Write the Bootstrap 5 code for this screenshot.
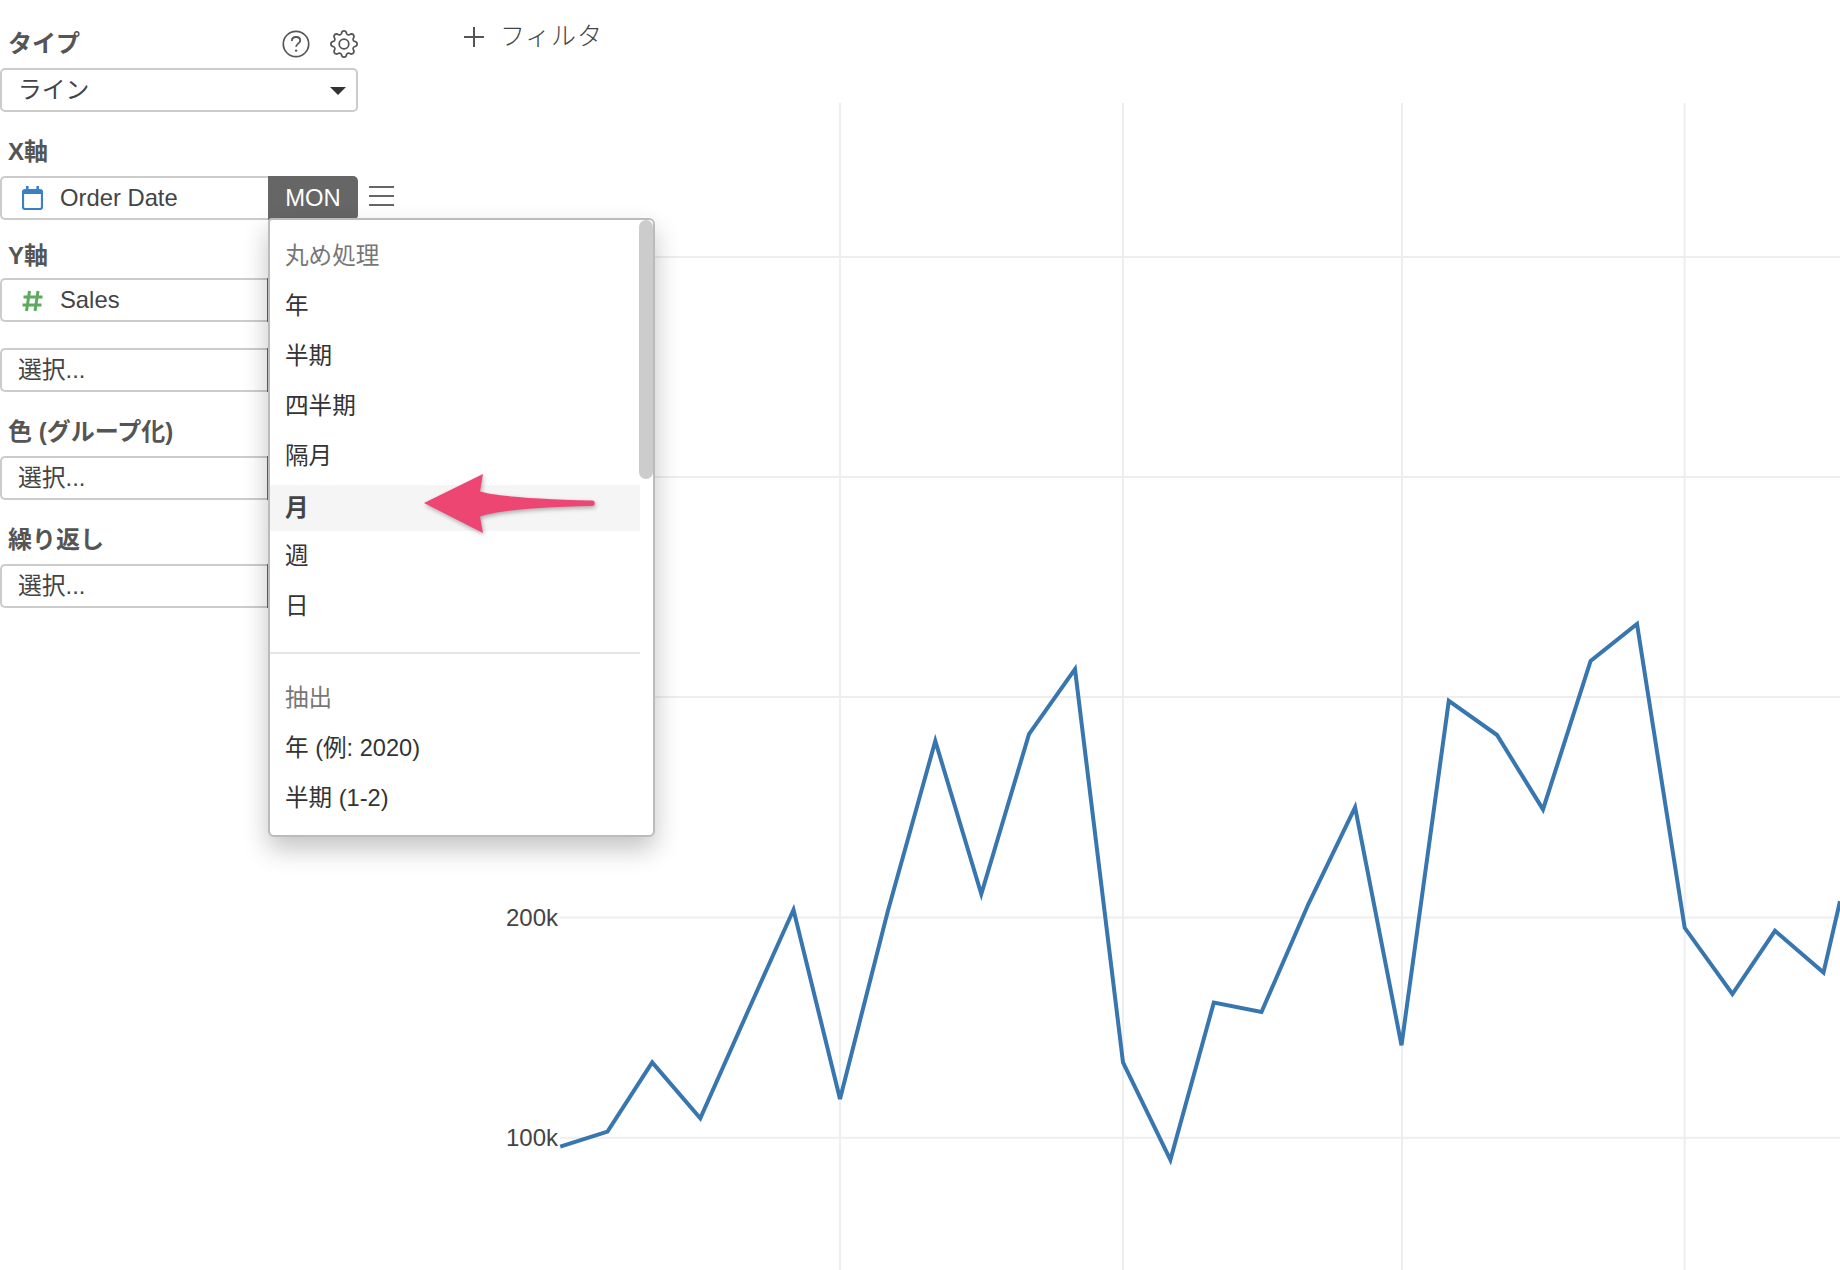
<!DOCTYPE html>
<html lang="ja">
<head>
<meta charset="utf-8">
<title>チャート</title>
<link href="https://cdn.jsdelivr.net/npm/bootstrap@5.3.0/dist/css/bootstrap.min.css" rel="stylesheet">
<style>
html,body{height:100%;}
body{font-family:"Liberation Sans","Noto Sans CJK JP",sans-serif;font-size:23.8px;color:#333;background:#fff;overflow:hidden;}
.stage{position:relative;width:1840px;height:1270px;overflow:hidden;}
.side{width:358px;flex:none;}
.lab{font-weight:700;color:#555;font-size:24px;line-height:34px;padding-left:8px;}
.lab-top{padding-top:27px;height:68px;}
.lab-x{margin-top:23px;height:41px;}
.lab-y{margin-top:20px;height:38px;line-height:32px;}
.lab-gap{margin-top:24px;height:40px;line-height:32px;}
.fld{height:44px;border:2.5px solid #ccc;border-radius:5px;background:#fff;line-height:39.5px;color:#444;padding-left:16px;white-space:nowrap;}
.typesel{position:relative;}
.typesel::after{content:"";position:absolute;right:10px;top:17px;border-left:8px solid transparent;border-right:8px solid transparent;border-top:8px solid #333;}
.rowf{width:358px;height:44px;}
.rowf-sel{margin-top:26px;}
.rowf .fld{flex:1 1 auto;border-right:0;border-radius:5px 0 0 5px;padding-left:20px;min-width:0;}
.rowf .fld.plain{padding-left:16px;}
.addon{flex:none;width:90px;background:#666;color:#fff;text-align:center;line-height:44px;border-radius:0 5px 5px 0;}
.addon.under{width:91px;}
.ic{flex:none;display:inline-block;margin-right:17px;vertical-align:-4px;}
.topic{position:absolute;top:30px;}
.burger{position:absolute;left:369px;top:186px;width:25px;height:20px;border-top:2px solid #666;border-bottom:2px solid #666;}
.burger::before{content:"";display:block;height:2px;background:#666;margin-top:7px;}
.mainp{flex:1 1 auto;min-width:0;}
.filt{height:103px;padding:19px 0 0 106px;color:#444;font-weight:300;font-size:25px;line-height:34px;letter-spacing:.8px;}
.filt svg{margin-right:16px;vertical-align:-2px;}
.chartsvg{display:block;}
.tick{font-family:"Liberation Sans",sans-serif;font-size:24px;fill:#444;text-anchor:end;}
.ddm.dropdown-menu{display:block;position:absolute;left:268px;top:218px;width:387px;height:619px;overflow:hidden;padding:11px 0 0;margin:0;border:2px solid #bbb;border-radius:4px 6px 6px 6px;box-shadow:0 12px 26px rgba(0,0,0,.24);font-size:23.6px;background:#fff;}
.ddm .inner{width:370px;}
.ddm .dropdown-header{padding:0 0 0 15px;line-height:50px;color:#777;font-size:23.6px;}
.ddm .dropdown-item{padding:0 0 0 15px;line-height:50px;color:#333;}
.ddm .dropdown-item.on{background:#f5f5f5;font-weight:700;line-height:46px;margin-top:4px;color:#444;}
.ddm .dropdown-divider{margin:21px 0 19px;border-top:2px solid #e5e5e5;opacity:1;}
.sbar{position:absolute;right:0;top:0;width:14px;height:259px;background:#ccc;border-radius:7px;}
.arrowsvg{position:absolute;left:415px;top:465px;z-index:1100;filter:drop-shadow(1px 2px 2px rgba(0,0,0,.3));}
</style>
</head>
<body>
<div class="stage d-flex">
  <aside class="side">
    <div class="lab lab-top">タイプ</div>
    <div class="fld typesel">ライン</div>
    <div class="lab lab-x">X軸</div>
    <div class="rowf d-flex">
      <div class="fld"><svg class="ic" width="21" height="24" viewBox="0 0 21 24"><rect x="1" y="4" width="19" height="19" rx="2" fill="none" stroke="#3a80c6" stroke-width="2.2"/><rect x="1" y="4" width="19" height="4" fill="#3a80c6"/><rect x="4" y="0" width="2.6" height="5" fill="#3a80c6"/><rect x="14.4" y="0" width="2.6" height="5" fill="#3a80c6"/></svg>Order Date</div>
      <div class="addon">MON</div>
    </div>
    <div class="lab lab-y">Y軸</div>
    <div class="rowf d-flex">
      <div class="fld"><svg class="ic" width="21" height="22" viewBox="0 0 21 22"><path d="M7.5 1 4.5 21M16 1l-3 20M1.5 7h19M.5 15h19" fill="none" stroke="#5cab5c" stroke-width="3"/></svg>Sales</div>
      <div class="addon under"></div>
    </div>
    <div class="rowf rowf-sel d-flex">
      <div class="fld plain">選択...</div>
      <div class="addon under"></div>
    </div>
    <div class="lab lab-gap">色 (グループ化)</div>
    <div class="rowf d-flex">
      <div class="fld plain">選択...</div>
      <div class="addon under"></div>
    </div>
    <div class="lab lab-gap">繰り返し</div>
    <div class="rowf d-flex">
      <div class="fld plain">選択...</div>
      <div class="addon under"></div>
    </div>
  </aside>
  <main class="mainp">
    <div class="filt"><svg width="20" height="20" viewBox="0 0 20 20"><path d="M10 0v20M0 10h20" stroke="#555" stroke-width="2"/></svg>フィルタ</div>
    <svg class="chartsvg" width="1482" height="1167" viewBox="358 103 1482 1167">
      <g stroke="#eee" stroke-width="2" fill="none">
        <path d="M560 257H1840M560 477H1840M560 697H1840M560 917.4H1840M560 1137.8H1840"/>
        <path d="M840 103V1270M1123 103V1270M1402 103V1270M1684.7 103V1270"/>
      </g>
      <text class="tick" x="558" y="926">200k</text>
      <text class="tick" x="558" y="1146">100k</text>
      <polyline fill="none" stroke="#3876b0" stroke-width="4" stroke-linejoin="miter" points="560.2,1146.6 607.5,1131.6 652.2,1062.4 700.3,1118.4 746.7,1014 793.5,909.8 840,1099.1 887.6,912 935.3,741 981.3,894 1029,734.2 1075,669.2 1123,1062.4 1170.4,1159.8 1213.8,1002.6 1261.5,1012 1308.3,904.3 1355.1,807.3 1401.5,1045.3 1448.8,700.9 1497,735 1543,809.4 1590.6,661 1637,623.9 1684.7,927.8 1732.4,994 1775,930.8 1823.5,972.6 1840,901.3"/>
    </svg>
  </main>

  <svg class="topic" style="left:282px" width="28" height="28" viewBox="0 0 28 28" aria-hidden="true"><circle cx="14" cy="14" r="12.7" fill="none" stroke="#555" stroke-width="1.7"/><path d="M9.8 11c0-2.6 2-4 4.3-4 2.4 0 4.1 1.5 4.1 3.5 0 3-4.1 3.2-4.1 6.2" fill="none" stroke="#555" stroke-width="1.8"/><circle cx="14.1" cy="20.6" r="1.2" fill="#555"/></svg>
  <svg class="topic" style="left:330px" width="28" height="28" viewBox="0 0 16 16" aria-hidden="true" fill="#555"><path d="M8 4.754a3.246 3.246 0 1 0 0 6.492 3.246 3.246 0 0 0 0-6.492zM5.754 8a2.246 2.246 0 1 1 4.492 0 2.246 2.246 0 0 1-4.492 0z"/><path d="M9.796 1.343c-.527-1.79-3.065-1.79-3.592 0l-.094.319a.873.873 0 0 1-1.255.52l-.292-.16c-1.64-.892-3.433.902-2.54 2.541l.159.292a.873.873 0 0 1-.52 1.255l-.319.094c-1.79.527-1.79 3.065 0 3.592l.319.094a.873.873 0 0 1 .52 1.255l-.16.292c-.892 1.64.901 3.434 2.541 2.54l.292-.159a.873.873 0 0 1 1.255.52l.094.319c.527 1.79 3.065 1.79 3.592 0l.094-.319a.873.873 0 0 1 1.255-.52l.292.16c1.64.893 3.434-.902 2.54-2.541l-.159-.292a.873.873 0 0 1 .52-1.255l.319-.094c1.79-.527 1.79-3.065 0-3.592l-.319-.094a.873.873 0 0 1-.52-1.255l.16-.292c.893-1.64-.902-3.433-2.541-2.54l-.292.159a.873.873 0 0 1-1.255-.52l-.094-.319zm-2.633.283c.246-.835 1.428-.835 1.674 0l.094.319a1.873 1.873 0 0 0 2.693 1.115l.291-.16c.764-.415 1.6.42 1.184 1.185l-.159.292a1.873 1.873 0 0 0 1.116 2.692l.318.094c.835.246.835 1.428 0 1.674l-.319.094a1.873 1.873 0 0 0-1.115 2.693l.16.291c.415.764-.42 1.6-1.185 1.184l-.291-.159a1.873 1.873 0 0 0-2.693 1.116l-.094.318c-.246.835-1.428.835-1.674 0l-.094-.319a1.873 1.873 0 0 0-2.692-1.115l-.292.16c-.764.415-1.6-.42-1.184-1.185l.159-.291A1.873 1.873 0 0 0 1.945 8.93l-.319-.094c-.835-.246-.835-1.428 0-1.674l.319-.094A1.873 1.873 0 0 0 3.06 4.377l-.16-.292c-.415-.764.42-1.6 1.185-1.184l.292.159a1.873 1.873 0 0 0 2.692-1.115l.094-.319z"/></svg>
  <div class="burger"></div>

  <div class="dropdown-menu ddm">
    <div class="inner">
      <div class="dropdown-header">丸め処理</div>
      <a class="dropdown-item" href="#">年</a>
      <a class="dropdown-item" href="#">半期</a>
      <a class="dropdown-item" href="#">四半期</a>
      <a class="dropdown-item" href="#">隔月</a>
      <a class="dropdown-item on" href="#">月</a>
      <a class="dropdown-item" href="#">週</a>
      <a class="dropdown-item" href="#">日</a>
      <hr class="dropdown-divider">
      <div class="dropdown-header">抽出</div>
      <a class="dropdown-item" href="#">年 (例: 2020)</a>
      <a class="dropdown-item" href="#">半期 (1-2)</a>
    </div>
    <div class="sbar"></div>
  </div>

  <svg class="arrowsvg" width="190" height="76" viewBox="415 465 190 76" aria-hidden="true"><path d="M424 503 483 474 480 491.5C500 497 540 499 592 500.5a2.7 2.7 0 0 1 0 5.5C540 507 500 510 480 516.5L483 533Z" fill="#ee4672"/></svg>
</div>
</body>
</html>
